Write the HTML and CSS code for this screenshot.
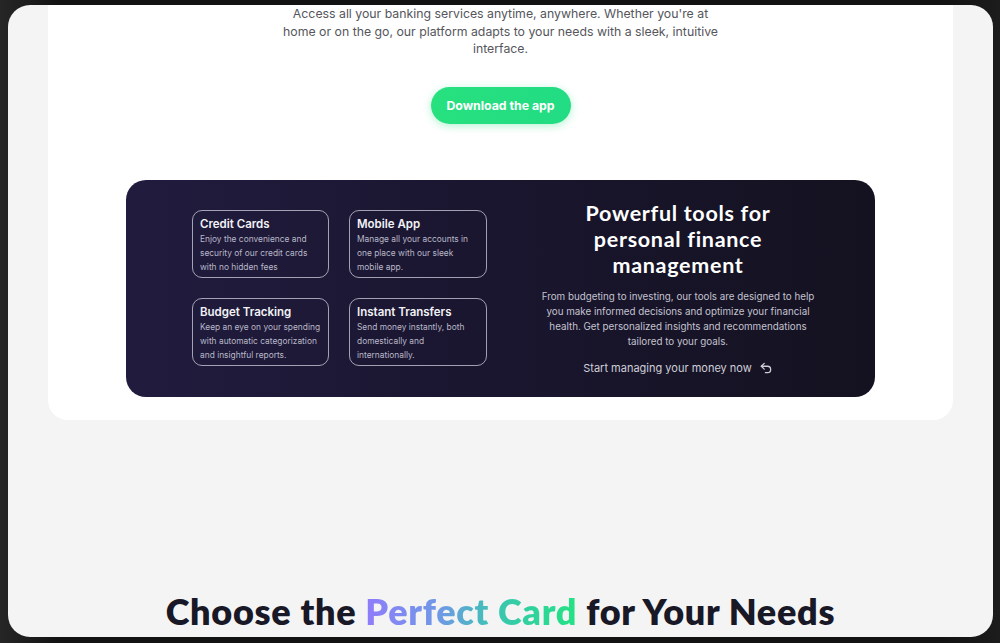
FILE: index.html
```html
<!DOCTYPE html>
<html lang="en">
<head>
<meta charset="utf-8">
<title>Banking tools</title>
<link rel="stylesheet" href="styles.css">
</head>
<body>
<div class="frame">
  <main class="page">
    <section class="hero-card">
      <p class="hero-text">Access all your banking services anytime, anywhere. Whether you're at home or on the go, our platform adapts to your needs with a sleek, intuitive interface.</p>
      <a class="btn-download" href="#">Download the app</a>

      <div class="tools-panel">
        <div class="features">
          <div class="feature">
            <h3>Credit Cards</h3>
            <p>Enjoy the convenience and security of our credit cards with no hidden fees</p>
          </div>
          <div class="feature">
            <h3>Mobile App</h3>
            <p>Manage all your accounts in one place with our sleek mobile app.</p>
          </div>
          <div class="feature">
            <h3>Budget Tracking</h3>
            <p>Keep an eye on your spending with automatic categorization and insightful reports.</p>
          </div>
          <div class="feature">
            <h3>Instant Transfers</h3>
            <p>Send money instantly, both domestically and internationally.</p>
          </div>
        </div>
        <div class="tools-copy">
          <h2>Powerful tools for personal finance management</h2>
          <p>From budgeting to investing, our tools are designed to help you make informed decisions and optimize your financial health. Get personalized insights and recommendations tailored to your goals.</p>
          <a class="tools-link" href="#">Start managing your money now
            <svg viewBox="0 0 24 24" width="14" height="14" fill="none" stroke="currentColor" stroke-width="2.2" stroke-linecap="round" stroke-linejoin="round"><path d="M9 14 4 9l5-5"/><path d="M4 9h10.5a5.5 5.5 0 0 1 0 11H11"/></svg>
          </a>
        </div>
      </div>
    </section>

    <h2 class="cards-title">Choose the <span class="accent">Perfect Card</span> for Your Needs</h2>
  </main>
</div>
</body>
</html>
```

FILE: styles.css
```css
* { box-sizing: border-box; }

html, body {
  margin: 0;
  height: 100%;
}

body {
  background: linear-gradient(90deg, #262626 0%, #121212 6%, #121212 94%, #1c1c1c 100%);
  font-family: "Inter", "Liberation Sans", sans-serif;
}

.frame {
  padding: 5px 7px 6px 8px;
  height: 643px;
}

.page {
  height: 632px;
  background: #f4f4f5;
  border-radius: 22px;
  overflow: hidden;
  display: flex;
  flex-direction: column;
  align-items: center;
}

.hero-card {
  align-self: stretch;
  margin: 0 40px;
  background: #ffffff;
  border-radius: 0 0 20px 20px;
  padding: 0 78px 23px;
  display: flex;
  flex-direction: column;
  align-items: center;
}

.hero-text {
  margin: 0;
  width: 445px;
  text-align: center;
  font-size: 12.3px;
  line-height: 17.6px;
  color: #55565c;
}

.btn-download {
  margin-top: 29px;
  width: 140px;
  height: 37px;
  border-radius: 19px;
  background: linear-gradient(90deg, #27e07e, #22dc84);
  box-shadow: 0 2px 8px rgba(34, 220, 130, 0.35);
  color: #ffffff;
  font-weight: 700;
  font-size: 12.3px;
  text-decoration: none;
  display: flex;
  align-items: center;
  justify-content: center;
}

.tools-panel {
  margin-top: 56px;
  align-self: stretch;
  height: 217px;
  border-radius: 20px;
  background: linear-gradient(90deg, #211c3e 0%, #1a1630 45%, #141220 100%);
  padding: 30px 55px 31px 66px;
  display: flex;
  align-items: center;
  gap: 51px;
}

.features {
  width: 295px;
  display: grid;
  grid-template-columns: 137px 138px;
  column-gap: 20px;
  row-gap: 20px;
}

.feature {
  height: 68px;
  border: 1px solid rgba(220, 220, 235, 0.7);
  border-radius: 10px;
  padding: 5px 7px 4px;
}

.feature h3 {
  margin: 0;
  font-size: 11.5px;
  line-height: 16px;
  font-weight: 600;
  color: #f2f2f6;
}

.feature p {
  margin: 0;
  font-size: 8.4px;
  line-height: 14px;
  color: #b9b8c8;
}

.tools-copy {
  width: 280px;
  display: flex;
  flex-direction: column;
  align-items: center;
  text-align: center;
}

.tools-copy h2 {
  margin: 0;
  width: 240px;
  font-family: "Lato", "Liberation Sans", sans-serif;
  font-weight: 700;
  font-size: 21.5px;
  line-height: 26px;
  color: #ffffff;
  letter-spacing: 0.7px;
}

.tools-copy p {
  margin: 11px 0 0;
  font-size: 9.8px;
  line-height: 15px;
  color: #c4c3d0;
}

.tools-link {
  margin-top: 11px;
  display: flex;
  align-items: center;
  gap: 7px;
  font-size: 11px;
  line-height: 16px;
  color: #cfcfd8;
  text-decoration: none;
}

.cards-title {
  margin: auto 0 6px;
  font-family: "Lato", "Liberation Sans", sans-serif;
  font-weight: 800;
  font-size: 36px;
  line-height: 40px;
  color: #181826;
  letter-spacing: 0.7px;
}

.accent {
  background: linear-gradient(90deg, #8f7cfb 0%, #6f99e6 35%, #3ac6b0 62%, #24e283 100%);
  -webkit-background-clip: text;
  background-clip: text;
  color: transparent;
}
```
